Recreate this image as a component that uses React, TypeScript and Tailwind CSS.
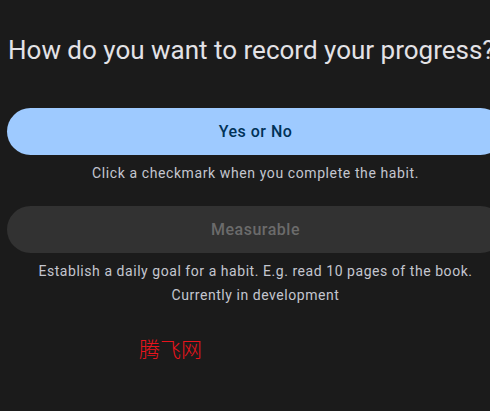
export default function App() {
  return (
    <div
      className="h-[411px] w-[490px] overflow-hidden bg-[#1b1b1b]"
      style={{ fontFamily: 'Roboto, "Noto Sans CJK SC", sans-serif' }}
    >
      <div className="w-[504px] pl-[7px] pt-[34px]">
        <h1 className="whitespace-nowrap pl-px text-[26px] leading-8 text-[#e3e2e6]">
          How do you want to record your progress?
        </h1>

        <button className="mt-[42px] flex h-[47px] w-full items-center justify-center rounded-full bg-[#9ecaff] text-base font-medium tracking-[0.5px] text-[#003258]">
          Yes or No
        </button>
        <p className="mt-2 text-center text-sm leading-5 tracking-[0.6px] text-[#c4c6cf]">
          Click a checkmark when you complete the habit.
        </p>

        <button className="mt-[23px] flex h-[47px] w-full items-center justify-center rounded-full bg-[#323232] text-base font-medium tracking-[0.5px] text-[#6b6b6b]">
          Measurable
        </button>
        <p className="mt-[6px] text-center text-sm leading-6 tracking-[0.55px] text-[#c4c6cf]">
          Establish a daily goal for a habit. E.g. read 10 pages of the book.
          <br />
          Currently in development
        </p>

        <div
          className="mt-[27px] pl-[132px] text-[21px] font-light leading-7 text-[#e8141c]"
          style={{ fontFamily: '"Noto Sans CJK SC", sans-serif' }}
        >
          腾飞网
        </div>
      </div>
    </div>
  );
}
